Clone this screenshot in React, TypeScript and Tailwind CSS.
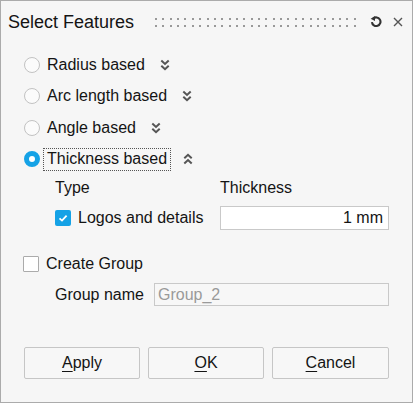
import { useState } from 'react'

type Mode = 'radius' | 'arc' | 'angle' | 'thickness'

const modes: { id: Mode; label: string }[] = [
  { id: 'radius', label: 'Radius based' },
  { id: 'arc', label: 'Arc length based' },
  { id: 'angle', label: 'Angle based' },
  { id: 'thickness', label: 'Thickness based' },
]

function DoubleChevron({ up }: { up?: boolean }) {
  return (
    <svg width="10" height="12" viewBox="0 0 10 12" className={up ? 'rotate-180' : ''}>
      <path d="M1.3 1.6 L5 5 L8.7 1.6 M1.3 6.8 L5 10.2 L8.7 6.8" fill="none" stroke="#555" strokeWidth="2" />
    </svg>
  )
}

function Radio({ checked }: { checked: boolean }) {
  return checked ? (
    <span className="w-4 h-4 rounded-full border-[5px] border-[#15a2e6] bg-white shrink-0" />
  ) : (
    <span className="w-4 h-4 rounded-full border-[1.5px] border-[#c2c2c2] bg-[#fbfbfb] shrink-0" />
  )
}

function Checkbox({ checked }: { checked: boolean }) {
  return checked ? (
    <span className="w-4 h-4 rounded-[2px] bg-[#15a2e6] flex items-center justify-center shrink-0">
      <svg width="12" height="12" viewBox="0 0 12 12">
        <path d="M2.5 6.3 L5 8.6 L9.6 3.6" fill="none" stroke="white" strokeWidth="1.8" />
      </svg>
    </span>
  ) : (
    <span className="w-4 h-4 rounded-[1px] border border-[#ababab] bg-white shrink-0" />
  )
}

function GripDots() {
  const dots = Array.from({ length: 28 })
  return (
    <div className="flex flex-col gap-[5px] w-[201px]">
      {[0, 1].map(r => (
        <div key={r} className="flex justify-between">
          {dots.map((_, i) => (
            <span key={i} className="w-[2px] h-[2px] bg-[#999]" />
          ))}
        </div>
      ))}
    </div>
  )
}

export default function App() {
  const [mode, setMode] = useState<Mode>('thickness')
  const [logos, setLogos] = useState(true)
  const [createGroup, setCreateGroup] = useState(false)

  return (
    <div className="w-[413px] h-[403px] border border-[#ababab] bg-[#f6f6f6] text-[#141414] font-['Liberation_Sans',Arial,sans-serif] text-[16px] select-none">
      {/* Title bar */}
      <div className="flex items-center h-[26px] mt-[8px] pl-[7px]">
        <span className="text-[18px] leading-[26px] w-[140px]">Select Features</span>
        <div className="ml-[7px]">
          <GripDots />
        </div>
        <svg width="12" height="12" viewBox="0 0 12 12" className="ml-[14px]">
          <path d="M3.2 2.6 A4.3 4.3 0 1 1 1.9 6.2" fill="none" stroke="#333" strokeWidth="2.1" />
          <path d="M0.6 2.7 L5 0.2 L5 5 Z" fill="#333" />
        </svg>
        <svg width="10" height="10" viewBox="0 0 10 10" className="ml-[11px]">
          <path d="M1 1 L9 9 M9 1 L1 9" stroke="#555" strokeWidth="1.4" />
        </svg>
      </div>

      {/* Feature modes */}
      <div className="mt-[14px] pl-[23px]">
        {modes.map(m => {
          const active = mode === m.id
          return (
            <div key={m.id} className="flex items-center h-[31.5px]" onClick={() => setMode(m.id)}>
              <Radio checked={active} />
              {active ? (
                <span className="ml-[3px] h-[23px] px-[3px] flex items-center border border-dotted border-[#555]">
                  {m.label}
                </span>
              ) : (
                <span className="ml-[7px]">{m.label}</span>
              )}
              <span className={active ? 'ml-[12px]' : 'ml-[15px]'}>
                <DoubleChevron up={active} />
              </span>
            </div>
          )
        })}
      </div>

      {/* Thickness options */}
      <div className="mt-[1px] pl-[54px] grid grid-cols-[165px_169px] gap-y-[6px]">
        <div className="h-[24px] flex items-center">Type</div>
        <div className="h-[24px] flex items-center">Thickness</div>
        <div className="h-[24px] flex items-center gap-[7px]" onClick={() => setLogos(!logos)}>
          <Checkbox checked={logos} />
          <span>Logos and details</span>
        </div>
        <input
          defaultValue="1 mm"
          className="h-[24px] w-[169px] border border-[#c9c9c9] bg-white text-right pr-[5px] outline-none"
        />
      </div>

      {/* Group */}
      <div className="mt-[22px] pl-[22px] h-[24px] flex items-center gap-[7px]" onClick={() => setCreateGroup(!createGroup)}>
        <Checkbox checked={createGroup} />
        <span>Create Group</span>
      </div>
      <div className="mt-[7px] pl-[54px] flex items-center h-[23px]">
        <span className="w-[99px]">Group name</span>
        <input
          disabled={!createGroup}
          defaultValue="Group_2"
          className="h-[23px] w-[235px] border border-[#c9c9c9] bg-[#f7f7f7] text-[#9a9a9a] pl-[3px] outline-none"
        />
      </div>

      {/* Actions */}
      <div className="mt-[41px] pl-[23px] flex gap-[8px]">
        <button className="w-[116px] h-[32px] border border-[#c6c6c6] rounded-[2px] bg-[#f7f7f7]">
          <span className="underline underline-offset-[3px] decoration-1">A</span>pply
        </button>
        <button className="w-[116px] h-[32px] border border-[#c6c6c6] rounded-[2px] bg-[#f7f7f7]">
          <span className="underline underline-offset-[3px] decoration-1">O</span>K
        </button>
        <button className="w-[117px] h-[32px] border border-[#c6c6c6] rounded-[2px] bg-[#f7f7f7]">
          <span className="underline underline-offset-[3px] decoration-1">C</span>ancel
        </button>
      </div>
    </div>
  )
}
